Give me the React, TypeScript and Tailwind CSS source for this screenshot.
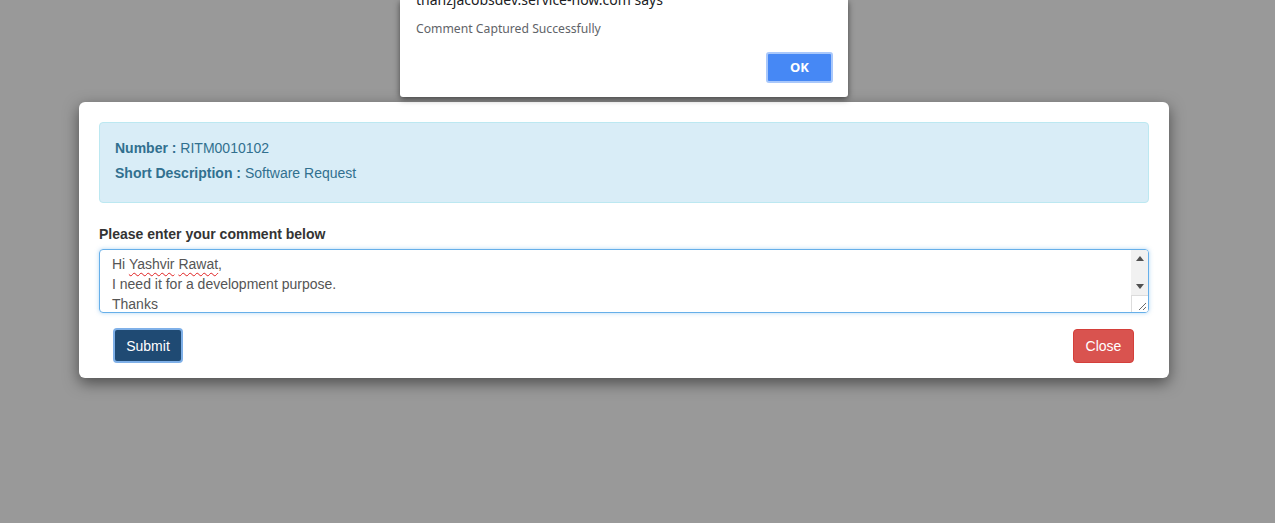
import React from "react";

function Scrollbar() {
  return (
    <div className="flex w-[17px] shrink-0 flex-col bg-[#f1f1f1]">
      <div className="flex h-[17px] items-center justify-center">
        <svg width="8" height="5" viewBox="0 0 8 5">
          <path d="M0 5 L4 0 L8 5 Z" fill="#505050" />
        </svg>
      </div>
      <div className="flex-1" />
      <div className="flex h-[17px] items-center justify-center">
        <svg width="8" height="5" viewBox="0 0 8 5">
          <path d="M0 0 L8 0 L4 5 Z" fill="#505050" />
        </svg>
      </div>
      <div className="flex h-[17px] items-end justify-end border-l border-t border-[#dcdcdc] bg-white pb-[1px] pr-[1px]">
        <svg width="10" height="10" viewBox="0 0 10 10">
          <path d="M9 2 L2 9 M9 6 L6 9" stroke="#6b6b6b" strokeWidth="1" />
        </svg>
      </div>
    </div>
  );
}

export default function App() {
  return (
    <div className="relative h-[523px] w-full overflow-hidden bg-[#999999] font-['Liberation_Sans',Arial,sans-serif]">
      {/* browser alert */}
      <div className="absolute left-[400px] top-0 z-10 h-[97px] w-[448px] rounded-b-[3px] bg-white pl-[16px] pr-[15px] shadow-[0_2px_6px_rgba(0,0,0,0.55)] font-['Noto_Sans','Open_Sans',sans-serif]">
        <div className="-mt-[10px] text-[14px] leading-[20px] text-[#202124]">
          thanzjacobsdev.service-now.com says
        </div>
        <div className="mt-[11px] text-[12.2px] leading-[16px] text-[#5f6368]">
          Comment Captured Successfully
        </div>
        <div className="mt-[15px] flex justify-end">
          <div className="flex h-[31px] w-[67px] items-center justify-center rounded-[3px] border-2 border-[#a9c8fb] bg-[#4688f5] text-[13px] font-bold text-white">
            OK
          </div>
        </div>
      </div>

      {/* modal */}
      <div className="ml-[79px] mt-[102px] w-[1090px] rounded-[6px] bg-white px-[20px] pb-[15px] pt-[20px] shadow-[0_5px_15px_rgba(0,0,0,0.5)]">
        <div className="rounded-[4px] border border-[#bce8f1] bg-[#d9edf7] px-[15px] pb-[19px] pt-[15px] text-[14px] leading-[20px] text-[#31708f]">
          <div>
            <span className="font-bold">Number :</span> RITM0010102
          </div>
          <div className="mt-[5px]">
            <span className="font-bold">Short Description :</span> Software Request
          </div>
        </div>

        <div className="mt-[21px] text-[14px] font-bold leading-[20px] text-[#333333]">
          Please enter your comment below
        </div>

        <div className="mt-[5px] flex h-[64px] overflow-hidden rounded-[4px] border border-[#66afe9] shadow-[0_0_4px_rgba(102,175,233,0.5)]">
          <div className="flex-1 overflow-hidden px-[12px] pt-[4px] text-[14px] leading-[20px] text-[#555555]">
            <div>
              Hi{" "}
              <span className="underline decoration-[#e02020] decoration-wavy decoration-[1px] underline-offset-[3px]">
                Yashvir
              </span>{" "}
              <span className="underline decoration-[#e02020] decoration-wavy decoration-[1px] underline-offset-[3px]">
                Rawat
              </span>
              ,
            </div>
            <div>I need it for a development purpose.</div>
            <div>Thanks</div>
          </div>
          <Scrollbar />
        </div>

        <div className="mt-[15px] flex items-start justify-between px-[14px]">
          <div className="flex h-[35px] w-[70px] items-center justify-center rounded-[4px] border-2 border-[#7fb0e8] bg-[#1f4a73] pt-[1px] text-[14px] text-white">
            Submit
          </div>
          <div className="mr-[1px] mt-[1px] flex h-[34px] w-[61px] items-center justify-center rounded-[4px] border border-[#d43f3a] bg-[#d9534f] text-[14px] text-white">
            Close
          </div>
        </div>
      </div>
    </div>
  );
}
